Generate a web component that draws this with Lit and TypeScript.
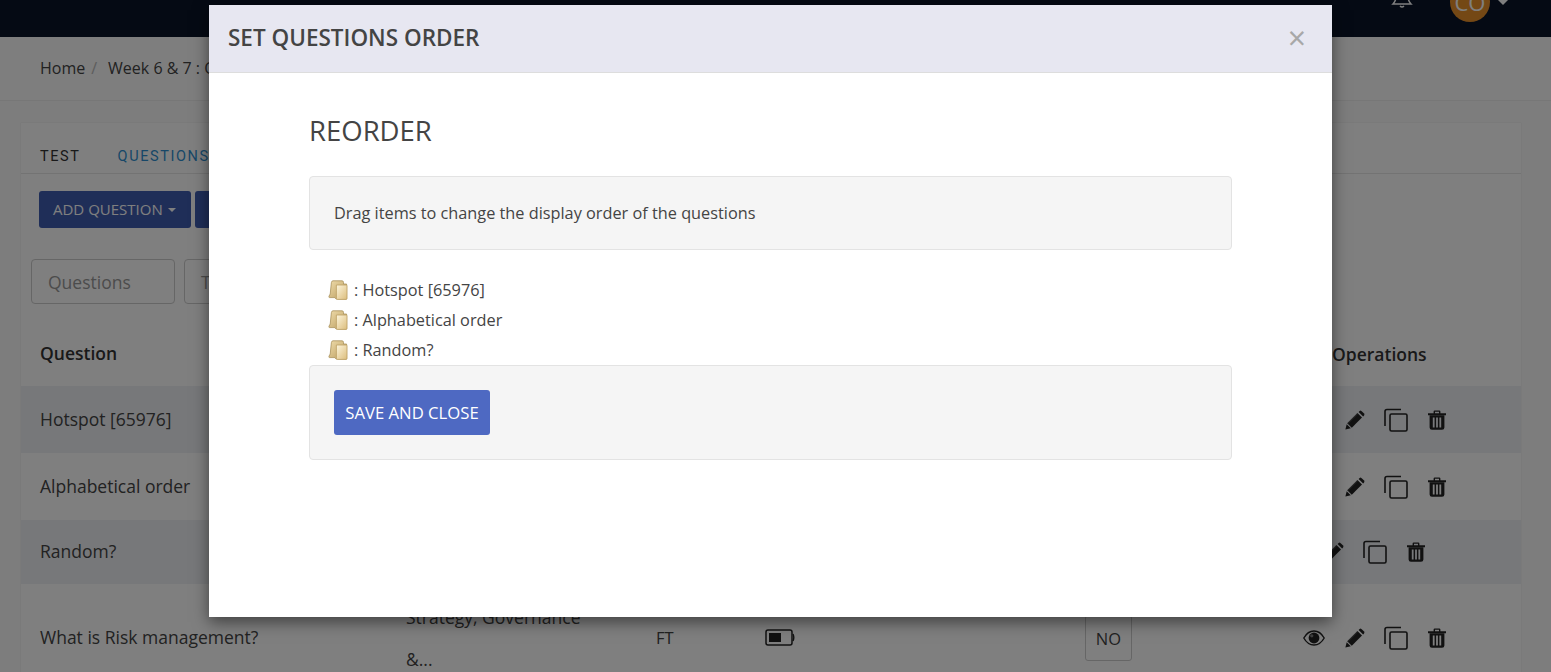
import { LitElement, html, css, svg } from "lit";
import { customElement } from "lit/decorators.js";

const folder = html`<svg class="folder" viewBox="0 0 20 20" width="20" height="20">
  <defs>
    <linearGradient id="fg" x1="0" y1="0" x2="1" y2="1"><stop offset="0" stop-color="#fdf6dd"/><stop offset="1" stop-color="#dcbd7c"/></linearGradient>
    <linearGradient id="fb" x1="0" y1="0" x2="1" y2="1"><stop offset="0" stop-color="#efdcaa"/><stop offset="1" stop-color="#b89a5c"/></linearGradient>
  </defs>
  <path d="M5 .8 H14 Q15.5 .8 15.5 2.4 V4 H18.6 V19 H8 L7 17.6 H1.6 Q.6 17.6 1 16.2 L2.2 14 L3.4 2.6 Q3.6 .8 5 .8 Z" fill="url(#fb)" stroke="#a8905a" stroke-width=".8"/>
  <path d="M8.4 5 H18.4 Q19 5 19 5.8 V18.4 Q19 19.4 18 19.4 H9.4 Q8.4 19.4 8.4 18.4 Z" fill="url(#fg)" stroke="#bb9f63" stroke-width=".8"/>
</svg>`;

const eye = svg`<svg class="ic" width="22" height="18" viewBox="0 0 22 18"><path d="M.8 9 C3.5 4.2 7 2 11 2 C15 2 18.5 4.2 21.2 9 C18.5 13.8 15 16 11 16 C7 16 3.5 13.8 .8 9 Z" fill="none" stroke="#222" stroke-width="1.4"/><circle cx="11" cy="9" r="5.4" fill="#222"/><circle cx="8.8" cy="6.8" r="1.6" fill="#7f7f7f"/></svg>`;
const pencil = svg`<svg class="ic" width="20" height="20" viewBox="0 0 20 20"><path d="M12.4 3 L17 7.6 L6.8 17.8 L2.2 13.2 Z" fill="#222"/><path d="M13.6 1.9 L14.6 .9 Q15.5 .2 16.4 .9 L19.1 3.6 Q19.8 4.5 19.1 5.4 L18.1 6.4 Z" fill="#222"/><path d="M1.7 14.2 L5.8 18.3 L.4 19.6 Z" fill="#222"/><path d="M3.2 13.2 L12.8 3.6" stroke="#7f7f7f" stroke-width=".6"/></svg>`;
const copy = svg`<svg class="ic" width="24" height="24" viewBox="0 0 24 24" fill="none" stroke="#222" stroke-width="1.6"><path d="M17 1.5 H3 Q1 1.5 1 3.5 V18"/><rect x="6" y="6" width="17" height="17" rx="1.5"/></svg>`;
const trash = svg`<svg class="ic" width="18" height="20" viewBox="0 0 18 20"><path d="M0 3.2 H18 V5.2 H0 Z M5.6 3.2 V1.5 Q5.6 .4 6.8 .4 H11.2 Q12.4 .4 12.4 1.5 V3.2 H11 V1.8 H7 V3.2 Z" fill="#222"/><path d="M1.6 5.2 H16.4 V17.4 Q16.4 19.8 14 19.8 H4 Q1.6 19.8 1.6 17.4 Z M4.8 7.4 V17.6 H6.6 V7.4 Z M8.1 7.4 V17.6 H9.9 V7.4 Z M11.4 7.4 V17.6 H13.2 V7.4 Z" fill="#222" fill-rule="evenodd"/></svg>`;

@customElement("app-root")
export class AppRoot extends LitElement {
  static styles = css`
    :host { display: block; position: relative; height: 672px; overflow: hidden; background: #fff; font-family: "Open Sans", sans-serif; font-size: 16.3px; color: #444; }
    .nav { height: 37px; background: #0a1428; display: flex; justify-content: flex-end; padding-right: 42px; overflow: hidden; align-items: flex-end; box-sizing: border-box; }
    .bell { margin-right: 37px; margin-bottom: 26px; }
    .avatar { width: 40px; height: 40px; border-radius: 50%; background: #e8902a; color: #fff; font-size: 22px; display: flex; align-items: center; justify-content: center; margin-bottom: 15px; margin-right: 7px; }
    .caret-top { width: 0; height: 0; border: 6px solid transparent; border-top-color: #fff; border-bottom: 0; margin-bottom: 32px; }
    .crumbs { height: 64px; box-sizing: border-box; border-bottom: 1px solid #eee; padding: 0 0 2px 40px; display: flex; align-items: center; gap: 6px; font-size: 16px; color: #444; background: #fcfcfc; }
    .sep { color: #bbb; margin-right: 5px; }
    .main { padding: 22px 30px 0 21px; background: #fafafa; height: 571px; box-sizing: border-box; }
    .card { background: #fff; height: 700px; box-shadow: 0 0 1px rgba(0,0,0,.15); }
    .tabs { height: 51px; box-sizing: border-box; border-bottom: 1px solid #e6e6e6; display: flex; align-items: center; padding: 16px 0 0 19px; gap: 37px; font-family: Roboto, sans-serif; font-size: 14.5px; letter-spacing: 1.6px; }
    .tabs .active { color: #333; } .tabs .q { color: #2f8fd0; }
    .btns { display: flex; gap: 4px; padding: 17px 0 0 18px; }
    .btn { height: 37px; background: #3e5cb0; color: #fff; border-radius: 3px; font-size: 15px; display: flex; align-items: center; box-sizing: border-box; padding: 0 14px 2px; gap: 5px; }
    .btn.w { width: 152px; } .btn.x { width: 60px; }
    .caret { width: 0; height: 0; border: 4.5px solid transparent; border-top-color: #fff; border-bottom: 0; margin-top: 3px; }
    .filters { display: flex; gap: 9px; padding: 31px 0 0 10px; }
    .inp { width: 144px; height: 45px; box-sizing: border-box; border: 1px solid #ccc; border-radius: 4px; padding-left: 16px; display: flex; align-items: center; font-size: 17.5px; color: #999; }
    .row { display: grid; grid-template-columns: 385px 250px 109px 320px 218px 1fr; align-items: center; font-size: 17.5px; }
    .row > :first-child { padding-left: 19px; padding-bottom: 2px; }
    .head { height: 82px; box-sizing: border-box; padding-top: 18px; font-weight: 600; color: #333; }
    .head .ops { padding-left: 29px; }
    .r1 { height: 67px; } .r3 { height: 64px; }
    .shade { background: #eef0f4; }
    .r4 { height: 108px; }
    .cat { line-height: 42px; }
    .ops-cell { display: flex; align-items: center; }
    .ops-cell .ic:nth-last-child(1) { margin-left: 20px; }
    .ops-cell .ic:nth-last-child(2) { margin-left: 19px; }
    .ops-cell .ic:nth-last-child(3) { margin-left: 20px; }
    .ops-cell.noeye { padding-left: 22px; }
    .ops-cell.shift { padding-left: 1px; }
    .ft { font-size: 16.5px; padding-bottom: 2px; }
    .no { width: 47px; height: 46px; border: 1px solid #ccc; border-radius: 3px; display: flex; align-items: center; justify-content: center; box-sizing: border-box; font-size: 16.5px; }
    .ic { display: block; flex: none; }
    .batt { display: block; margin: 0 0 2px 0; }
    .backdrop { position: absolute; inset: 0; background: rgba(0,0,0,.5); }
    .modal { position: absolute; left: 209px; top: 5px; width: 1123px; height: 612px; background: #fff; box-shadow: 0 5px 15px rgba(0,0,0,.5); display: flex; flex-direction: column; }
    .mh { height: 68px; box-sizing: border-box; background: #e7e7f1; border-bottom: 1px solid #ddd; display: flex; align-items: center; justify-content: space-between; padding: 0 26px 3px 19px; flex: none; }
    .mh h4 { margin: 0; font-size: 22.5px; font-weight: 600; color: #444; }
    .close { font-size: 32px; color: #a8a8a8; line-height: 1; font-weight: 400; margin-top: 1px; }
    .mb { padding: 39px 100px 0 100px; }
    h3 { margin: 0 0 27px 0; font-size: 27.5px; font-weight: 400; line-height: 37px; color: #444; }
    .well { background: #f5f5f5; border: 1px solid #e3e3e3; border-radius: 4px; box-sizing: border-box; padding: 0 24px; display: flex; align-items: center; }
    .w1 { height: 74px; }
    .w2 { height: 95px; }
    .list { list-style: none; margin: 0; padding: 25px 0 0 19px; height: 115px; box-sizing: border-box; }
    .list li { height: 30px; display: flex; align-items: center; gap: 6px; }
    .save { height: 45px; width: 156px; background: #4e69c2; color: #fff; border-radius: 3px; display: flex; align-items: center; justify-content: center; font-size: 16.7px; }
  `;
  render() {
    return html`
      <div class="nav">
        <svg class="bell" width="22" height="24" viewBox="0 0 22 24" fill="none" stroke="#fff" stroke-width="1.5"><path d="M2 17 Q5 14 5 9 Q5 3 11 3 Q17 3 17 9 Q17 14 20 17 Z"/><path d="M9 19 Q11 21 13 19"/></svg>
        <div class="avatar">CO</div>
        <div class="caret-top"></div>
      </div>
      <div class="crumbs"><span>Home</span><span class="sep">/</span><span>Week 6 &amp; 7 : Organization</span></div>
      <div class="main"><div class="card">
        <div class="tabs"><span class="active">TEST</span><span class="q">QUESTIONS</span></div>
        <div class="btns"><div class="btn w">ADD QUESTION <span class="caret"></span></div><div class="btn x"></div></div>
        <div class="filters"><div class="inp">Questions</div><div class="inp">Type</div></div>
        <div class="row head"><div>Question</div><div></div><div></div><div></div><div></div><div class="ops">Operations</div></div>
        <div class="row r1 shade"><div>Hotspot [65976]</div><div></div><div></div><div></div><div></div><div class="ops-cell noeye">${pencil}${copy}${trash}</div></div>
        <div class="row r1"><div>Alphabetical order</div><div></div><div></div><div></div><div></div><div class="ops-cell noeye">${pencil}${copy}${trash}</div></div>
        <div class="row r3 shade"><div>Random?</div><div></div><div></div><div></div><div></div><div class="ops-cell shift">${pencil}${copy}${trash}</div></div>
        <div class="row r4"><div>What is Risk management?</div><div class="cat">Strategy, Governance<br>&amp;...</div><div class="ft">FT</div>
          <div><svg class="batt" width="30" height="17" viewBox="0 0 30 17"><rect x="1" y="1" width="26" height="15" rx="2" fill="none" stroke="#222" stroke-width="1.5"/><rect x="4" y="4" width="12" height="9" fill="#222"/><path d="M28 5 Q29.6 8.5 28 12" stroke="#222" fill="none" stroke-width="1.4"/></svg></div>
          <div><div class="no">NO</div></div>
          <div class="ops-cell">${eye}${pencil}${copy}${trash}</div>
        </div>
      </div></div>
      <div class="backdrop"></div>
      <div class="modal">
        <div class="mh"><h4>SET QUESTIONS ORDER</h4><span class="close">×</span></div>
        <div class="mb">
          <h3>REORDER</h3>
          <div class="well w1">Drag items to change the display order of the questions</div>
          <ul class="list">
            <li>${folder}<span>: Hotspot [65976]</span></li>
            <li>${folder}<span>: Alphabetical order</span></li>
            <li>${folder}<span>: Random?</span></li>
          </ul>
          <div class="well w2"><div class="save">SAVE AND CLOSE</div></div>
        </div>
      </div>`;
  }
}
